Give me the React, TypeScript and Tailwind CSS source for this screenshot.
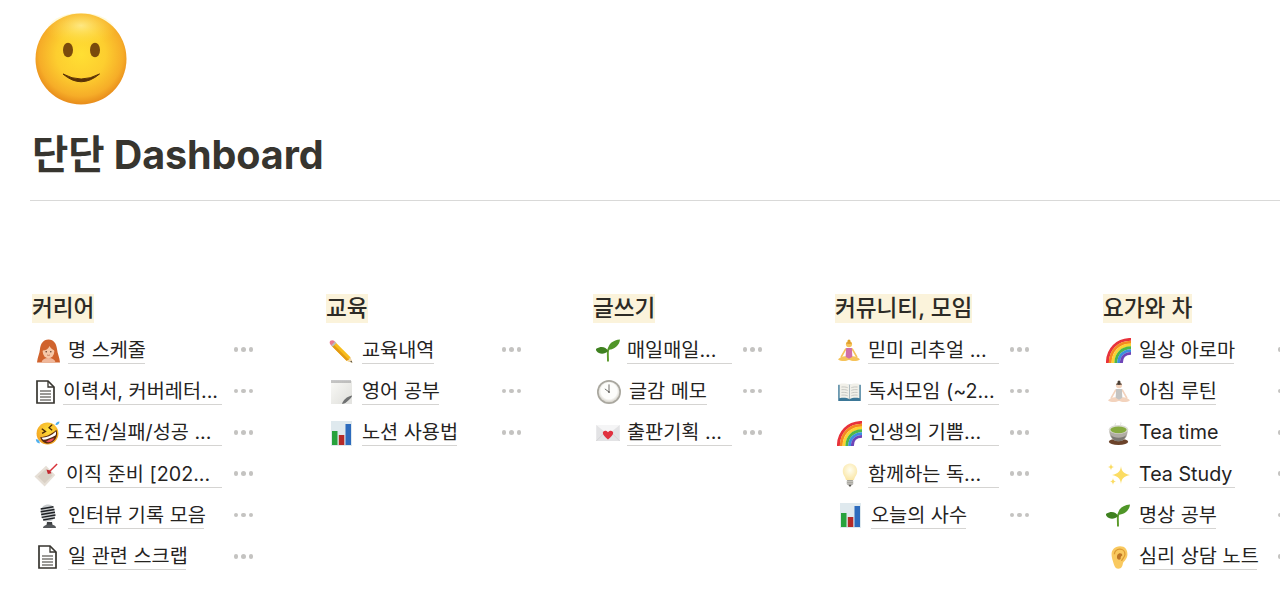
import type { ReactNode } from "react";

const Smile = () => (
  <svg width="92" height="92" viewBox="0 0 92 92">
    <defs>
      <radialGradient id="face" cx="50%" cy="45%" r="54%">
        <stop offset="0%" stopColor="#ffdf33" />
        <stop offset="50%" stopColor="#fdce2f" />
        <stop offset="85%" stopColor="#f6ad28" />
        <stop offset="100%" stopColor="#e98f1c" />
      </radialGradient>
      <radialGradient id="shine" cx="50%" cy="35%" r="55%">
        <stop offset="0%" stopColor="#fff3a0" stopOpacity="0.75" />
        <stop offset="100%" stopColor="#ffe23c" stopOpacity="0" />
      </radialGradient>
    </defs>
    <circle cx="46" cy="46" r="45.5" fill="url(#face)" />
    <ellipse cx="46" cy="18" rx="34" ry="18" fill="url(#shine)" />
    <ellipse cx="33" cy="37" rx="5" ry="7.3" fill="#7a4a0c" />
    <ellipse cx="60" cy="37" rx="5" ry="7.3" fill="#7a4a0c" />
    <path d="M28 61 Q46 76.500 64.500 61 Q46 71 28 61Z" fill="#5a3206" stroke="#5a3206" strokeWidth="1" strokeLinejoin="round" />
  </svg>
);

const Woman = () => (
  <svg width="25" height="24" viewBox="0 0 24 24">
    <path d="M12 .5C6.500 .5 4 5 3.500 10 3 15 1 18 .5 23.500h23C23 18 21 15 20.500 10 20 5 17.500 .5 12 .5Z" fill="#d0632d" />
    <path d="M5 23.500c.5-3 3-4.500 7-4.500s6.500 1.500 7 4.500Z" fill="#f0b79a" />
    <ellipse cx="12" cy="12.500" rx="5.800" ry="6.800" fill="#f6c8a8" />
    <path d="M6 11.500c3 0 6-1.500 7-4.500 1 2 3 4 5 4.500l-.5-6L12 3.500 7 5.500Z" fill="#d0632d" />
    <circle cx="9.700" cy="12.800" r=".8" fill="#5b3a29" />
    <circle cx="14.300" cy="12.800" r=".8" fill="#5b3a29" />
    <path d="M10.500 16q1.500 .8 3 0" stroke="#b5654a" strokeWidth=".7" fill="none" />
  </svg>
);

const Doc = () => (
  <svg width="19" height="24" viewBox="0 0 19 24" fill="none" stroke="#37352f" strokeWidth="1.700">
    <path d="M1 1h11l6 6v16H1Z" />
    <path d="M12 1v6h6" strokeWidth="1.300" />
    <path d="M4 11h11M4 14h11M4 17h11M4 20h11" strokeWidth="1.100" />
  </svg>
);

const Rofl = () => (
  <svg width="25" height="25" viewBox="0 0 24 24">
    <defs>
      <radialGradient id="rofl" cx="55%" cy="35%" r="65%">
        <stop offset="0%" stopColor="#ffe03a" />
        <stop offset="100%" stopColor="#f3a122" />
      </radialGradient>
    </defs>
    <circle cx="12" cy="12" r="10.500" fill="url(#rofl)" />
    <path d="M6.500 7.500 10 10 6.800 11.800M16.500 3.500 13.500 6.500 16.500 8.800" fill="none" stroke="#4a2a08" strokeWidth="1.300" />
    <path d="M5 15.500C10 15.500 16 13 20.500 8.500 23 14 19 21 13 21.500 9 21.800 6 19 5 15.500Z" fill="#5a2a10" />
    <path d="M6.300 16C11 16 16 14 20 10 20.500 12 20 13.500 19.500 14 15 16.500 11 18 8 18 7.500 17.500 6.800 17 6.300 16Z" fill="#fff" />
    <path d="M10.500 20C13 18 16 16.500 18.500 16.500 17.500 19 14 21.500 10.500 20Z" fill="#e9505f" />
    <path d="M.8 17.500c0 2.200 1.500 4 3.700 4 .5-2-1-4-3.700-4ZM23.500 .5c-2 0-3.800 1.500-3.800 3.300 1.800 .5 3.800-.8 3.800-3.300Z" fill="#4fb0ee" />
  </svg>
);

const Tag = () => (
  <svg width="25" height="24" viewBox="0 0 27 26">
    <path d="M.5 14.500 13 3l10 10-11.500 12.500Z" fill="#e6dfd6" />
    <path d="M4 14.500l9-8 7 7-8.500 8.500Z" fill="#d9d0c5" />
    <path d="M16.500 9.500 25 1" stroke="#d8323a" strokeWidth="1.600" />
    <path d="M13.500 7l3.500 1 2 3-4 1Z" fill="#c2282f" />
  </svg>
);

const Mic = () => (
  <svg width="20" height="24" viewBox="0 0 20 24">
    <g transform="rotate(-10 10 9)">
      <rect x="3" y=".5" width="14" height="17" rx="6.500" fill="#c9ccce" />
      <path d="M3.500 3.800h13M3 6.600h14M3 9.400h14M3 12.200h14M4 15h12" stroke="#1d2024" strokeWidth="1.500" />
    </g>
    <path d="M9 18h5l.5 3h-6Z" fill="#3d4043" />
    <path d="M5 24c0-2 3-3.500 7-3.500s6 1.500 6 3.500Z" fill="#54575a" />
  </svg>
);

const Pencil = () => (
  <svg width="24" height="24" viewBox="0 0 26 26">
    <path d="M7 3.500 23 19.500 25 25.500 19 23.500 3 7.500Z" fill="#f7bd1c" />
    <path d="M3 7.500 19 23.500 21.500 22.500 5 6Z" fill="#e29a14" />
    <path d="M1.500 6C.5 5 .5 3 1.500 2s3-1 4 0L7 3.500 3 7.500Z" fill="#e9798f" />
    <path d="M2.500 6.800 6.500 2.800 8 4.300 4 8.300Z" fill="#b9bcc0" />
    <path d="M23 19.500 25.500 25.500 19 23.500 21.500 22.500Z" fill="#f0d7b0" />
    <path d="M24 23.500 25.500 25.500 23 24.800Z" fill="#333" />
  </svg>
);

const Notepad = () => (
  <svg width="21" height="24" viewBox="0 0 21 24">
    <defs>
      <linearGradient id="pad" x1="0" y1="0" x2="1" y2="1">
        <stop offset="0%" stopColor="#f9f9f6" />
        <stop offset="100%" stopColor="#dededa" />
      </linearGradient>
    </defs>
    <path d="M0 1h21v16l-7 7H0Z" fill="url(#pad)" />
    <path d="M1 0v3M3 0v3M5 0v3M7 0v3M9 0v3M11 0v3M13 0v3M15 0v3M17 0v3M19 0v3" stroke="#77777a" strokeWidth=".8" />
    <path d="M11 24c1-4 5-7.500 10-8.500-.5 4-4 7.500-10 8.500Z" fill="#6f7172" />
    <path d="M13.500 24 21 17v7Z" fill="#e4e4e1" />
  </svg>
);

const Chart = () => (
  <svg width="21" height="25" viewBox="0 0 21 25">
    <rect width="21" height="25" fill="#dfe9ee" />
    <rect x="1" y="10" width="5.500" height="14" fill="#27a23c" />
    <rect x="7.800" y="14" width="5.500" height="10" fill="#b52a28" />
    <rect x="14.500" y="3" width="5.500" height="21" fill="#2d6bbd" />
  </svg>
);

const Sprout = () => (
  <svg width="24" height="23" viewBox="0 0 25 24">
    <path d="M12.500 23.500c0-6-.5-9 0-11.500 .6-3 3-4 4.500-4.500" fill="none" stroke="#5b9a2a" strokeWidth="2" />
    <path d="M12.500 11C12.500 5 18 1 25 .5 24.500 6.500 19 11.500 12.500 11Z" fill="#4f9628" />
    <path d="M12.500 12.500C10.500 8 5 7 .5 10 -.5 11 0 11.500 .5 12.500 3 16 9 16.500 12.500 12.500Z" fill="#3f8120" />
  </svg>
);

const Clock = () => (
  <svg width="24" height="24" viewBox="0 0 25 25">
    <defs>
      <radialGradient id="clk" cx="50%" cy="45%" r="55%">
        <stop offset="70%" stopColor="#fdfdfb" />
        <stop offset="100%" stopColor="#d2cfc6" />
      </radialGradient>
    </defs>
    <circle cx="12.500" cy="12.500" r="12.500" fill="#a9a79f" />
    <circle cx="12.500" cy="12.500" r="10.800" fill="url(#clk)" />
    <path d="M12.500 12.500V5M12.500 12.500 8.500 9.500" stroke="#5a5955" strokeWidth=".9" strokeLinecap="round" />
    <circle cx="12.500" cy="12.500" r=".9" fill="#5a5955" />
  </svg>
);

const Letter = () => (
  <svg width="24" height="16" viewBox="0 0 25 17">
    <rect width="25" height="17" fill="#e3e3e5" />
    <path d="M0 0l12.500 10L25 0Z" fill="#f5f5f6" />
    <path d="M0 17l9-9M25 17l-9-9" stroke="#cfcfd2" strokeWidth=".8" />
    <path d="M12.500 15.500C9.500 12.500 7 10.800 7 8.500c0-2 2.800-3.500 5.500-.8C15.200 5 18 6.500 18 8.500c0 2.300-2.500 4-5.500 7Z" fill="#e0313f" />
  </svg>
);

const Yoga = ({ skin, top, hair }: { skin: string; top: string; hair: string }) => (
  <svg width="24" height="23" viewBox="0 0 24 24">
    <circle cx="12" cy="5.500" r="3.200" fill={skin} />
    <circle cx="12" cy="2" r="1.600" fill={hair} />
    <path d="M8.800 4.800c.3-2.400 6.100-2.400 6.400 0-2 .5-4.500 .5-6.400 0Z" fill={hair} />
    <path d="M8.500 10.500 4 18.500M15.500 10.500 20 18.500" fill="none" stroke={skin} strokeWidth="1.700" strokeLinecap="round" />
    <path d="M.5 21C4 18 8 17 12 19 16 17 20 18 23.500 21 20 24 15 23 12 22 9 23 4 24 .5 21Z" fill={skin} />
    <path d="M9 9.500h6l.5 9L12 20.500 8.500 18.500Z" fill={top} />
  </svg>
);

const Book = () => (
  <svg width="23" height="18" viewBox="0 0 25 20">
    <path d="M0 2h25v18H0Z" fill="#3b7797" />
    <path d="M1.500 1c4-1 8-.5 11 1 3-1.500 7-2 11-1v16c-4-1-8-.5-11 1-3-1.500-7-2-11-1Z" fill="#f1f0e9" />
    <path d="M12.500 2v16" stroke="#8fa5b0" strokeWidth=".8" />
    <path d="M3.500 4.500c2.500-.3 5-.1 7 .7M3.500 7.500c2.500-.3 5-.1 7 .7M3.500 10.500c2.500-.3 5-.1 7 .7M3.500 13.500c2.500-.3 5-.1 7 .7M21.500 4.500c-2.500-.3-5-.1-7 .7M21.500 7.500c-2.500-.3-5-.1-7 .7M21.500 10.500c-2.500-.3-5-.1-7 .7M21.500 13.500c-2.500-.3-5-.1-7 .7" stroke="#b5b6b2" strokeWidth=".8" fill="none" />
  </svg>
);

const Rainbow = () => (
  <svg width="25" height="25" viewBox="0 0 25 25" fill="none" strokeWidth="2.900">
    <path d="M1.400 25C1.400 11 11 1.400 25 1.400" stroke="#e8323a" />
    <path d="M4.200 25C4.200 12.500 12.500 4.200 25 4.200" stroke="#f58a1f" />
    <path d="M7 25C7 14.500 14.500 7 25 7" stroke="#fbd331" />
    <path d="M9.800 25C9.800 16 16 9.800 25 9.800" stroke="#4fb848" />
    <path d="M12.600 25C12.600 17.500 17.500 12.600 25 12.600" stroke="#3b8fe0" />
    <path d="M15.400 25C15.400 19 19 15.400 25 15.400" stroke="#6e45b8" />
  </svg>
);

const Bulb = () => (
  <svg width="16" height="24" viewBox="0 0 20 26" preserveAspectRatio="none">
    <defs>
      <radialGradient id="bulb" cx="50%" cy="40%" r="60%">
        <stop offset="0%" stopColor="#fffef0" />
        <stop offset="100%" stopColor="#fae6a6" />
      </radialGradient>
    </defs>
    <path d="M10 .5C4.500 .5 1 4.500 1 9c0 4 3 5.500 4 9.500h10c1-4 4-5.500 4-9.500 0-4.500-3.500-8.500-9-8.500Z" fill="url(#bulb)" />
    <rect x="6" y="18.500" width="8" height="5" rx="1" fill="#a5a49e" />
    <path d="M6 20h8M6 22h8" stroke="#d8d7d0" strokeWidth=".7" />
    <path d="M8 23.500h4l-1 2H9Z" fill="#5b5a55" />
  </svg>
);

const Tea = () => (
  <svg width="23" height="23" viewBox="0 0 23 25">
    <ellipse cx="11.500" cy="21.500" rx="10.500" ry="3.400" fill="#6b432a" />
    <path d="M1.500 8c0 9 3.500 13 10 13s10-4 10-13Z" fill="#b0aca4" />
    <path d="M3 14c2 5 4.500 7 8.500 7s6.500-2 8.500-7c-2 2-5 3-8.500 3S5 16 3 14Z" fill="#7c7872" />
    <ellipse cx="11.500" cy="8" rx="10.500" ry="4.800" fill="#dddcd5" />
    <ellipse cx="11.500" cy="8.500" rx="8.800" ry="3.700" fill="#87ab40" />
    <path d="M8 1c1 1 -1 2 0 3M14 .5c1 1 -1 2 0 3" stroke="#d8d8d4" strokeWidth=".8" fill="none" />
  </svg>
);

const Sparkles = () => (
  <svg width="23" height="23" viewBox="0 0 23 23" fill="#fbdc63">
    <path d="M14 3c.6 5.500 2.800 7.800 9 9-6.200 1.200-8.400 3.500-9 9-.6-5.500-2.800-7.800-9-9 6.200-1.200 8.400-3.500 9-9Z" />
    <path d="M4 .5c.3 2.500 1 3.200 3.500 3.500C5 4.300 4.300 5 4 7.500 3.700 5 3 4.300 .5 4 3 3.700 3.700 3 4 .5Z" />
    <path d="M6 15c.3 2.500 1 3.200 3.200 3.500-2.200 .3-2.900 1-3.200 3.500-.3-2.500-1-3.200-3.200-3.500C5 18.200 5.700 17.500 6 15Z" />
  </svg>
);

const Ear = () => (
  <svg width="17" height="23" viewBox="0 0 15 22" preserveAspectRatio="none">
    <path d="M8 .3C3 .3 .5 4 .5 8c0 2.500 .5 4.500 1.200 6.500S3 21.700 6.500 21.700c3 0 3.500-2.500 4-5 .5-2 4-3.800 4-8.700C14.500 3.500 12.500 .3 8 .3Z" fill="#f9c95f" />
    <path d="M3 8c0-3 2-5 4.800-5s4.500 2.300 4.500 4.800c0 3-2.300 3.800-3 6.500" fill="none" stroke="#dc9a33" strokeWidth="1.100" />
    <path d="M5.500 12c-.8-2.600 .5-5 2.500-5 1.200 0 2 .8 2 2-1 .5-1.800 1.800-1.400 3.500-1 .8-2.600 .8-3.100-.5Z" fill="#bd7526" />
  </svg>
);

type Row = { icon: ReactNode; iconBox: string; label: string; line: string };
type Col = { title: string; box: string; rowWidth: string; rows: Row[] };

const cols: Col[] = [
  {
    title: "커리어",
    box: "w-[294px]",
    rowWidth: "w-[221px]",
    rows: [
      { icon: <Woman />, iconBox: "w-[36px] pl-[4px]", label: "명 스케줄", line: "w-[77px]" },
      { icon: <Doc />, iconBox: "w-[31px] pl-[4px]", label: "이력서, 커버레터...", line: "w-[159px]" },
      { icon: <Rofl />, iconBox: "w-[34px] pl-[3px]", label: "도전/실패/성공 ...", line: "w-[156px]" },
      { icon: <Tag />, iconBox: "w-[34px] pl-[2px]", label: "이직 준비 [202...", line: "w-[156px]" },
      { icon: <Mic />, iconBox: "w-[36px] pl-[6px]", label: "인터뷰 기록 모음", line: "w-[136px]" },
      { icon: <Doc />, iconBox: "w-[36px] pl-[6px]", label: "일 관련 스크랩", line: "w-[118px]" },
    ],
  },
  {
    title: "교육",
    box: "w-[267px]",
    rowWidth: "w-[195px]",
    rows: [
      { icon: <Pencil />, iconBox: "w-[36px] pl-[3px]", label: "교육내역", line: "w-[72px]" },
      { icon: <Notepad />, iconBox: "w-[36px] pl-[5px]", label: "영어 공부", line: "w-[77px]" },
      { icon: <Chart />, iconBox: "w-[36px] pl-[5px]", label: "노션 사용법", line: "w-[95px]" },
    ],
  },
  {
    title: "글쓰기",
    box: "w-[242px]",
    rowWidth: "w-[169px]",
    rows: [
      { icon: <Sprout />, iconBox: "w-[34px] pl-[3px]", label: "매일매일...", line: "w-[105px]" },
      { icon: <Clock />, iconBox: "w-[36px] pl-[4px]", label: "글감 메모", line: "w-[78px]" },
      { icon: <Letter />, iconBox: "w-[34px] pl-[3px]", label: "출판기획 ...", line: "w-[105px]" },
    ],
  },
  {
    title: "커뮤니티, 모임",
    box: "w-[268px]",
    rowWidth: "w-[194px]",
    rows: [
      { icon: <Yoga skin="#f6c35a" top="#cf6fa8" hair="#e0a02c" />, iconBox: "w-[33px] pl-[2px]", label: "믿미 리추얼 ...", line: "w-[131px]" },
      { icon: <Book />, iconBox: "w-[33px] pl-[3px]", label: "독서모임 (~2...", line: "w-[131px]" },
      { icon: <Rainbow />, iconBox: "w-[33px] pl-[2px]", label: "인생의 기쁨...", line: "w-[131px]" },
      { icon: <Bulb />, iconBox: "w-[33px] pl-[7px]", label: "함께하는 독...", line: "w-[131px]" },
      { icon: <Chart />, iconBox: "w-[36px] pl-[5px]", label: "오늘의 사수", line: "w-[95px]" },
    ],
  },
  {
    title: "요가와 차",
    box: "w-[200px]",
    rowWidth: "w-[194px]",
    rows: [
      { icon: <Rainbow />, iconBox: "w-[36px] pl-[3px]", label: "일상 아로마", line: "w-[95px]" },
      { icon: <Yoga skin="#f3d3bd" top="#c4c4c2" hair="#4a3f36" />, iconBox: "w-[36px] pl-[4px]", label: "아침 루틴", line: "w-[77px]" },
      { icon: <Tea />, iconBox: "w-[36px] pl-[4px]", label: "Tea time", line: "w-[82px]" },
      { icon: <Sparkles />, iconBox: "w-[36px] pl-[4px]", label: "Tea Study", line: "w-[96px]" },
      { icon: <Sprout />, iconBox: "w-[36px] pl-[3px]", label: "명상 공부", line: "w-[77px]" },
      { icon: <Ear />, iconBox: "w-[36px] pl-[8px]", label: "심리 상담 노트", line: "w-[118px]" },
    ],
  },
];

const Dots = () => (
  <div className="flex shrink-0 gap-[3px]">
    <span className="h-[4.500px] w-[4.500px] rounded-full bg-[#c4c3c1]" />
    <span className="h-[4.500px] w-[4.500px] rounded-full bg-[#c4c3c1]" />
    <span className="h-[4.500px] w-[4.500px] rounded-full bg-[#c4c3c1]" />
  </div>
);

export default function App() {
  return (
    <div
      className="h-[594px] w-[1280px] overflow-hidden bg-white text-[#37352f]"
      style={{ fontFamily: 'Inter, "Noto Sans CJK KR", sans-serif' }}
    >
      <div className="pl-[35px] pt-[13px]">
        <Smile />
      </div>
      <h1 className="ml-[32px] mt-[22px] whitespace-nowrap text-[39.500px] font-bold leading-[56px] tracking-[-0.1px]">단단 Dashboard</h1>
      <div className="ml-[30px] mt-[17px] h-px bg-[#d9d9d8]" />

      <div className="mt-[93px] flex pl-[32px]">
        {cols.map((col) => (
          <div key={col.title} className={`shrink-0 ${col.box}`}>
            <div className="flex h-[29px]">
              <span className="whitespace-nowrap bg-[#fbf3db] text-[22.600px] font-medium leading-[27px] text-[#2c2a25]">
                {col.title}
              </span>
            </div>
            <div className="mt-[6px]">
              {col.rows.map((row) => (
                <div key={row.label} className={`flex h-[41.330px] items-center justify-between ${col.rowWidth}`}>
                  <div className="flex items-center">
                    <div className={`mt-[2px] flex shrink-0 items-center ${row.iconBox}`}>{row.icon}</div>
                    <span className={`block h-[28px] whitespace-nowrap border-b border-[#d5d4d2] pt-[1px] text-[19.700px] leading-[27px] text-[#25231f] ${row.line}`}>
                      {row.label}
                    </span>
                  </div>
                  <Dots />
                </div>
              ))}
            </div>
          </div>
        ))}
      </div>
    </div>
  );
}
